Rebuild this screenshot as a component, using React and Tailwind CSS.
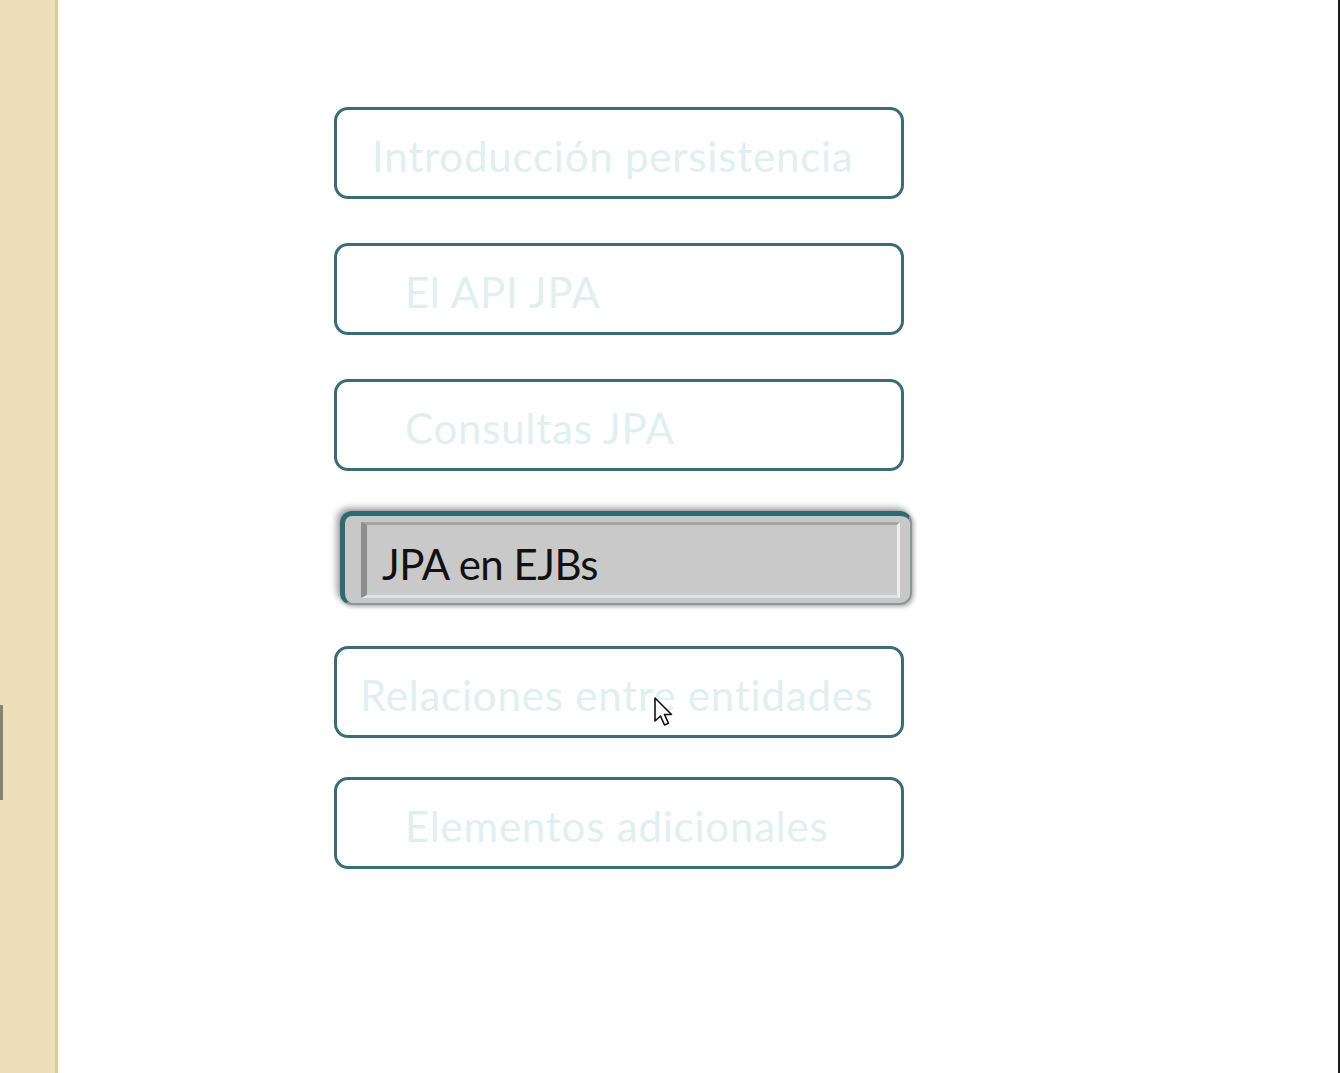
import React from "react";

const items = [
  { label: "Introducción persistencia", pad: "pl-[35px]", mt: "mt-[107px]" },
  { label: "El API JPA", pad: "pl-[68px]", mt: "mt-[44px]" },
  { label: "Consultas JPA", pad: "pl-[68px]", mt: "mt-[44px]" },
  { label: "JPA en EJBs", active: true, mt: "mt-[40px]" },
  { label: "Relaciones entre entidades", pad: "pl-[23px]", mt: "mt-[41px]" },
  { label: "Elementos adicionales", pad: "pl-[68px]", mt: "mt-[39px]" },
];

const Cursor = () => (
  <svg
    className="absolute left-[653px] top-[696px]"
    width="22"
    height="32"
    viewBox="0 0 22 32"
  >
    <path
      d="M2 2 L2 25 L7.5 20 L11.5 29 L15.5 27.3 L11.5 18.5 L18.5 18.5 Z"
      fill="#fff"
      stroke="#111"
      strokeWidth="1.6"
      strokeLinejoin="round"
    />
  </svg>
);

const MenuButton = ({ item }) => {
  if (item.active) {
    return (
      <div
        className={`${item.mt} ml-[6px] w-[572px] h-[94px] rounded-[12px] bg-[#c9c8c8] border-t-[5px] border-l-[5px] border-r-[2px] border-b-[2px] border-t-[#2f6a72] border-l-[#2f6a72] border-r-[#8b9696] border-b-[#8b9696] shadow-[-3px_-3px_7px_rgba(0,0,0,0.4),2px_2px_4px_rgba(0,0,0,0.25)] flex items-center pl-[16px] pr-[10px]`}
      >
        <div className="w-full h-[76px] flex items-center pl-[15px] bg-[#cac9c9] border-l-[6px] border-t-[3px] border-l-[#8d8d8d] border-t-[#a4a4a4] border-r-[3px] border-b-[3px] border-r-[#eeeeee] border-b-[#e2e2e2]">
          <span className="text-[42px] leading-none text-[#111] tracking-[-0.5px] mt-[8px]">
            {item.label}
          </span>
        </div>
      </div>
    );
  }
  return (
    <div
      className={`${item.mt} w-[570px] h-[92px] rounded-[14px] border-[3px] border-[#3b6c78] bg-white flex items-center ${item.pad}`}
    >
      <span className="text-[42px] leading-none text-[#e2eff0] tracking-[0.8px] mt-[6px] whitespace-nowrap">
        {item.label}
      </span>
    </div>
  );
};

export default function App() {
  return (
    <div
      className="relative flex w-[1340px] h-[1073px] overflow-hidden bg-white"
      style={{ fontFamily: "Lato, 'Open Sans', sans-serif" }}
    >
      <div className="relative w-[58px] h-full bg-[#eddfb9] border-r-[3px] border-r-[#d9cc9f]">
        <div className="absolute left-0 top-[705px] w-[3px] h-[95px] bg-[#8a8272] blur-[0.5px]" />
      </div>
      <div className="flex-1 h-full flex flex-col pl-[276px] border-r-[2px] border-r-[#1c1c1c]">
        {items.map((item) => (
          <MenuButton key={item.label} item={item} />
        ))}
      </div>
      <Cursor />
    </div>
  );
}
